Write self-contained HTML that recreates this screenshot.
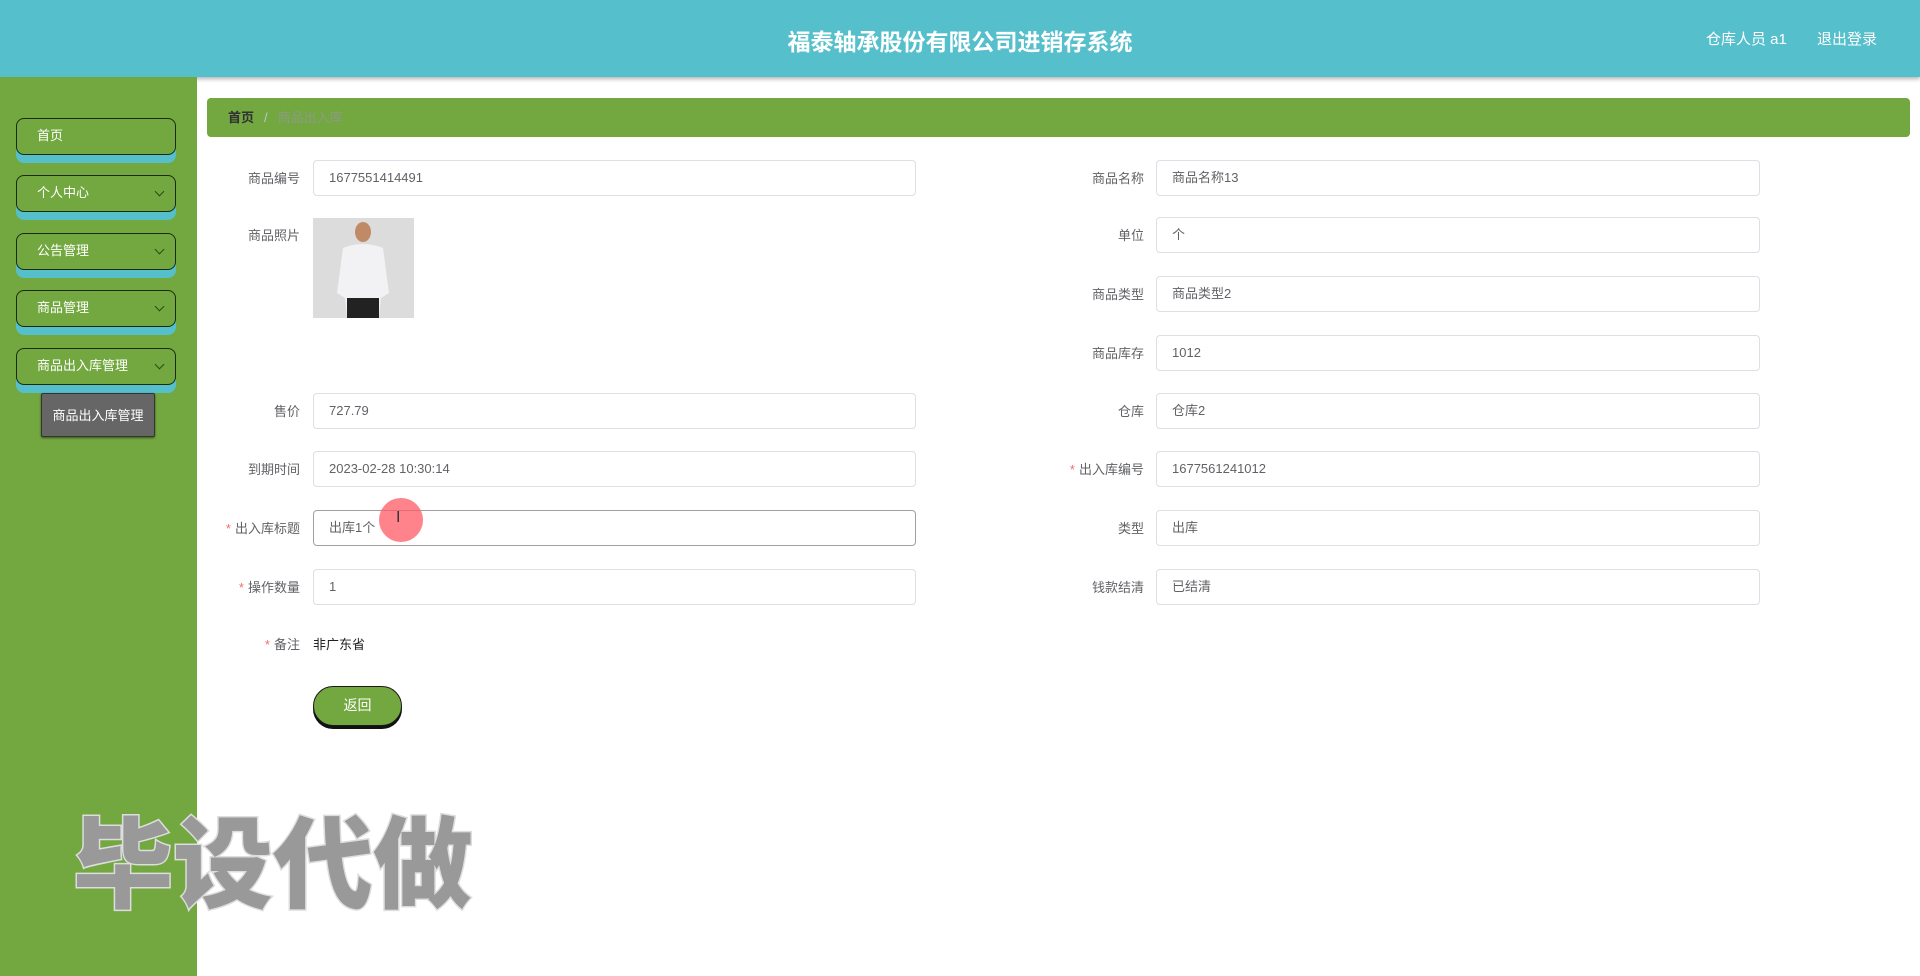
<!DOCTYPE html>
<html><head><meta charset="utf-8"><style>
*{margin:0;padding:0;box-sizing:border-box}
body{width:1920px;height:976px;overflow:hidden;background:#fff;font-family:"Liberation Sans","Noto Sans CJK SC",sans-serif;position:relative}
.hdr{position:absolute;left:0;top:0;width:1920px;height:77px;background:#55bfcb;box-shadow:0 2px 4px rgba(0,0,0,.3)}
.title{position:absolute;left:0;width:1920px;top:23px;text-align:center;color:#fff;font-size:23px;font-weight:bold}
.usr{position:absolute;top:28px;color:#fff;font-size:15px}
.side{position:absolute;left:0;top:77px;width:197px;height:899px;background:#72a83f}
.mi{position:absolute;left:16px;width:160px;height:37px;border:1.5px solid #1c2a10;border-radius:8px;background:#72a83f;color:#fff;font-size:13px;line-height:34px;padding-left:20px;box-shadow:0 8px 0 #55bfcb}
.mi .ar{position:absolute;right:12px;top:12px;width:7px;height:7px;border-right:1px solid #2d4a12;border-bottom:1px solid #2d4a12;transform:rotate(45deg)}
.sub{position:absolute;left:41px;top:393px;width:114px;height:44px;background:#666;color:#fff;font-size:13px;line-height:44px;text-align:center;border:1px solid #333;border-radius:2px;box-shadow:0 1px 2px rgba(0,0,0,.5)}
.bc{position:absolute;left:207px;top:98px;width:1703px;height:39px;background:#72a83f;border-radius:4px;font-size:13px;line-height:39px;padding-left:21px}
.lbl{position:absolute;font-size:13px;color:#606266;text-align:right;width:200px}
.lbl b{color:#f56c6c;font-weight:normal;margin-right:4px}
.inp{position:absolute;height:36px;border:1px solid #dcdfe6;border-radius:4px;font-size:13px;color:#606266;line-height:34px;padding-left:15px;background:#fff}
.btn{position:absolute;left:313px;top:686px;width:89px;height:40px;border-radius:20px;background:#72a83f;border:1.5px solid #1a1a1a;box-shadow:0 3px 0 #111;color:#fff;font-size:14px;text-align:center;line-height:37px}
.wm{position:absolute;left:73px;top:797px;font-size:100px;font-weight:900;color:#999;-webkit-text-stroke:3px #ddd;paint-order:stroke fill;font-family:"Noto Sans CJK SC","WenQuanYi Zen Hei",sans-serif;line-height:120px}
.cur{position:absolute;left:379px;top:498px;width:44px;height:44px;border-radius:50%;background:rgba(255,90,100,.75)}
</style></head><body>
<div class="hdr"><div class="title">福泰轴承股份有限公司进销存系统</div>
<div class="usr" style="left:1706px">仓库人员 a1</div><div class="usr" style="left:1817px">退出登录</div></div>
<div class="side"></div>
<div class="mi" style="top:118px">首页</div>
<div class="mi" style="top:175px">个人中心<span class="ar"></span></div>
<div class="mi" style="top:233px">公告管理<span class="ar"></span></div>
<div class="mi" style="top:290px">商品管理<span class="ar"></span></div>
<div class="mi" style="top:348px">商品出入库管理<span class="ar"></span></div>
<div class="sub">商品出入库管理</div>
<div class="bc"><b style="color:#303133">首页</b><span style="color:#c0c4cc;margin:0 10px">/</span><span style="color:#8e9a86">商品出入库</span></div>

<div class="lbl" style="left:100px;top:168px">商品编号</div><div class="inp" style="left:313px;top:160px;width:603px">1677551414491</div>
<div class="lbl" style="left:100px;top:225px">商品照片</div>
<svg style="position:absolute;left:313px;top:218px" width="101" height="100" viewBox="0 0 101 100"><rect width="101" height="100" fill="#dcdcdc"/><ellipse cx="50" cy="14" rx="8" ry="10" fill="#c08a66"/><path d="M30 30 Q50 22 70 30 L76 75 L68 80 L66 100 L34 100 L32 80 L24 75 Z" fill="#f2f2f4"/><path d="M34 80 L66 80 L66 100 L34 100Z" fill="#222"/></svg>
<div class="lbl" style="left:100px;top:401px">售价</div><div class="inp" style="left:313px;top:393px;width:603px">727.79</div>
<div class="lbl" style="left:100px;top:459px">到期时间</div><div class="inp" style="left:313px;top:451px;width:603px">2023-02-28 10:30:14</div>
<div class="lbl" style="left:100px;top:518px"><b>*</b>出入库标题</div><div class="inp" style="left:313px;top:510px;width:603px;border-color:#a0a0a0">出库1个</div>
<div class="lbl" style="left:100px;top:577px"><b>*</b>操作数量</div><div class="inp" style="left:313px;top:569px;width:603px">1</div>
<div class="lbl" style="left:100px;top:634px"><b>*</b>备注</div><div style="position:absolute;left:313px;top:634px;font-size:13px;color:#222">非广东省</div>
<div class="btn">返回</div>

<div class="lbl" style="left:944px;top:168px">商品名称</div><div class="inp" style="left:1156px;top:160px;width:604px">商品名称13</div>
<div class="lbl" style="left:944px;top:225px">单位</div><div class="inp" style="left:1156px;top:217px;width:604px">个</div>
<div class="lbl" style="left:944px;top:284px">商品类型</div><div class="inp" style="left:1156px;top:276px;width:604px">商品类型2</div>
<div class="lbl" style="left:944px;top:343px">商品库存</div><div class="inp" style="left:1156px;top:335px;width:604px">1012</div>
<div class="lbl" style="left:944px;top:401px">仓库</div><div class="inp" style="left:1156px;top:393px;width:604px">仓库2</div>
<div class="lbl" style="left:944px;top:459px"><b>*</b>出入库编号</div><div class="inp" style="left:1156px;top:451px;width:604px">1677561241012</div>
<div class="lbl" style="left:944px;top:518px">类型</div><div class="inp" style="left:1156px;top:510px;width:604px">出库</div>
<div class="lbl" style="left:944px;top:577px">钱款结清</div><div class="inp" style="left:1156px;top:569px;width:604px">已结清</div>

<div class="cur"></div><div style="position:absolute;left:396px;top:509px;font-size:16px;color:#333">I</div>
<div class="wm">毕设代做</div>
</body></html>
